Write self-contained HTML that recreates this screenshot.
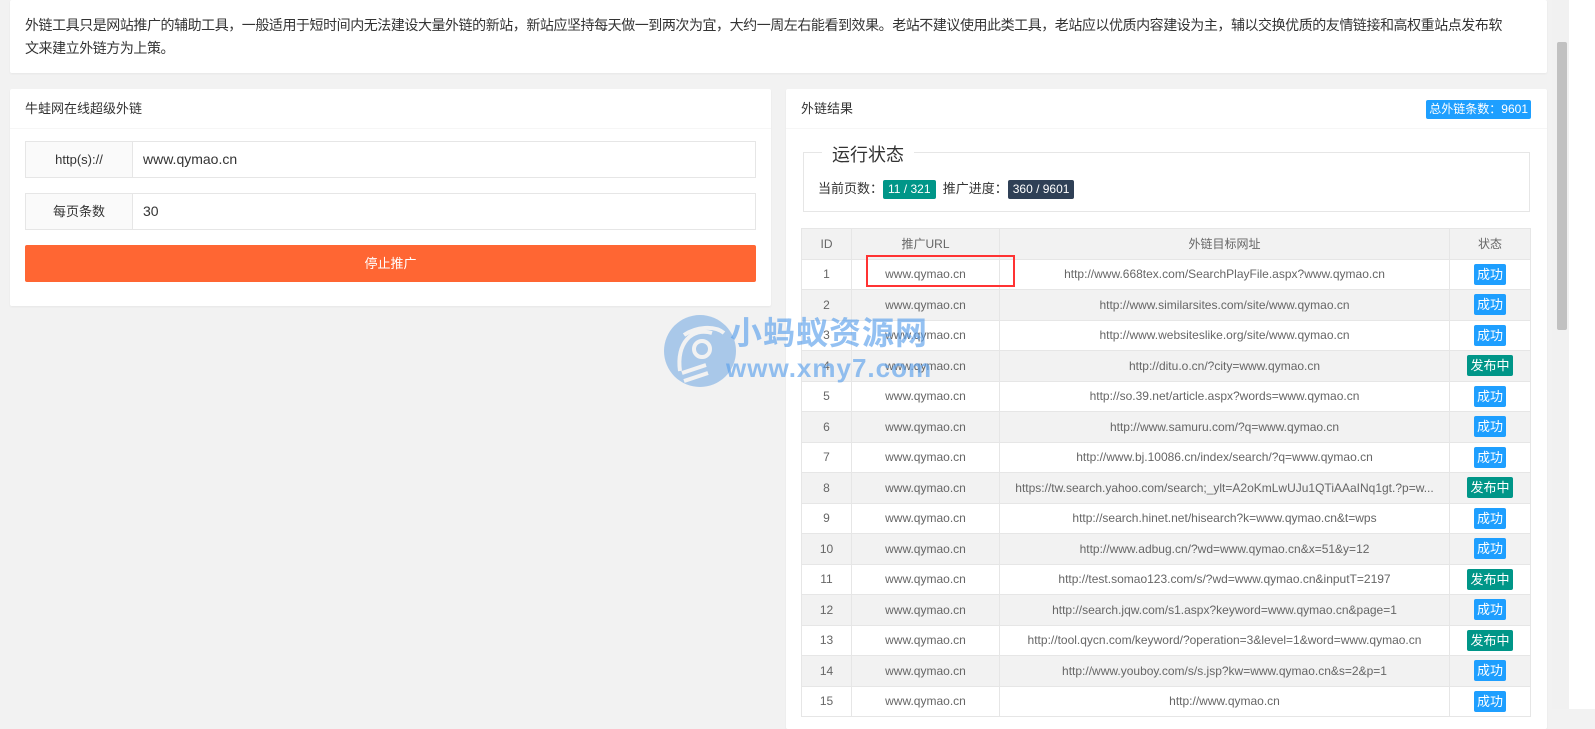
<!DOCTYPE html>
<html><head><meta charset="utf-8"><style>
*{box-sizing:border-box;margin:0;padding:0}
body{width:1595px;height:709px;overflow:hidden;background:#f2f2f2;font-family:"Liberation Sans","Noto Sans CJK SC",sans-serif;color:#333;font-size:13px;position:relative}
.card{position:absolute;background:#fff;border-radius:2px;box-shadow:0 1px 2px rgba(0,0,0,.05)}
.hd{height:40px;line-height:40px;padding:0 15px;border-bottom:1px solid #f6f6f6;font-size:13px;color:#333}
.row{position:absolute;left:15px;width:731px;height:37px;border:1px solid #e6e6e6;display:flex}
.row .l{width:107px;border-right:1px solid #e6e6e6;background:#fafafa;text-align:center;line-height:35px;font-size:13px}
.row .v{padding-left:10px;line-height:35px;font-size:14px}
table{position:absolute;left:15px;top:139px;width:730px;border-collapse:collapse;font-size:12px;color:#666}
td,th{border:1px solid #e6e6e6;height:30.5px;text-align:center;font-weight:normal;padding:0}
th{background:#f2f2f2;color:#666}
tr:nth-child(odd) td{background:#f2f2f2}
.b{display:inline-block;color:#fff;font-size:13px;padding:0 3px;height:21px;line-height:21px;border-radius:2px}
.ok{background:#1E9FFF}.ing{background:#009688}
</style></head><body>
<div class="card" style="left:10px;top:0;width:1537px;height:73px;padding:14px 15px;font-size:14px;line-height:23px;color:#333;letter-spacing:-0.45px;white-space:nowrap;overflow:hidden">外链工具只是网站推广的辅助工具，一般适用于短时间内无法建设大量外链的新站，新站应坚持每天做一到两次为宜，大约一周左右能看到效果。老站不建议使用此类工具，老站应以优质内容建设为主，辅以交换优质的友情链接和高权重站点发布软<br>文来建立外链方为上策。</div>

<div class="card" style="left:10px;top:89px;width:761px;height:217px">
<div class="hd">牛蛙网在线超级外链</div>
<div class="row" style="top:52px"><div class="l">http(s)://</div><div class="v">www.qymao.cn</div></div>
<div class="row" style="top:104px"><div class="l">每页条数</div><div class="v">30</div></div>
<div style="position:absolute;left:15px;top:156px;width:731px;height:37px;background:#ff6633;color:#fff;text-align:center;line-height:37px;font-size:13px;border-radius:2px">停止推广</div>
</div>

<div class="card" style="left:786px;top:89px;width:761px;height:640px">
<div class="hd">外链结果<span class="b ok" style="position:absolute;right:16px;top:11px;height:19px;line-height:19px;font-size:12px">总外链条数：9601</span></div>
<div style="position:absolute;left:17px;top:63px;width:727px;height:60px;border:1px solid #e6e6e6"></div>
<div style="position:absolute;left:36px;top:52px;background:#fff;padding:0 10px;font-size:18px;color:#333">运行状态</div>
<div style="position:absolute;left:32px;top:89px;font-size:13px;color:#333">当前页数：<span class="b ing" style="font-size:12px;height:19px;line-height:19px;padding:0 5px">11 / 321</span>&nbsp; 推广进度：<span class="b" style="background:#2F4056;font-size:12px;height:19px;line-height:19px;padding:0 5px">360 / 9601</span></div>
<table>
<tr><th style="width:50px">ID</th><th style="width:148px">推广URL</th><th>外链目标网址</th><th style="width:81px">状态</th></tr>
<tr><td>1</td><td>www.qymao.cn</td><td>http://www.668tex.com/SearchPlayFile.aspx?www.qymao.cn</td><td><span class="b ok">成功</span></td></tr>
<tr><td>2</td><td>www.qymao.cn</td><td>http://www.similarsites.com/site/www.qymao.cn</td><td><span class="b ok">成功</span></td></tr>
<tr><td>3</td><td>www.qymao.cn</td><td>http://www.websiteslike.org/site/www.qymao.cn</td><td><span class="b ok">成功</span></td></tr>
<tr><td>4</td><td>www.qymao.cn</td><td>http://ditu.o.cn/?city=www.qymao.cn</td><td><span class="b ing">发布中</span></td></tr>
<tr><td>5</td><td>www.qymao.cn</td><td>http://so.39.net/article.aspx?words=www.qymao.cn</td><td><span class="b ok">成功</span></td></tr>
<tr><td>6</td><td>www.qymao.cn</td><td>http://www.samuru.com/?q=www.qymao.cn</td><td><span class="b ok">成功</span></td></tr>
<tr><td>7</td><td>www.qymao.cn</td><td>http://www.bj.10086.cn/index/search/?q=www.qymao.cn</td><td><span class="b ok">成功</span></td></tr>
<tr><td>8</td><td>www.qymao.cn</td><td>https://tw.search.yahoo.com/search;_ylt=A2oKmLwUJu1QTiAAaINq1gt.?p=w...</td><td><span class="b ing">发布中</span></td></tr>
<tr><td>9</td><td>www.qymao.cn</td><td>http://search.hinet.net/hisearch?k=www.qymao.cn&amp;t=wps</td><td><span class="b ok">成功</span></td></tr>
<tr><td>10</td><td>www.qymao.cn</td><td>http://www.adbug.cn/?wd=www.qymao.cn&amp;x=51&amp;y=12</td><td><span class="b ok">成功</span></td></tr>
<tr><td>11</td><td>www.qymao.cn</td><td>http://test.somao123.com/s/?wd=www.qymao.cn&amp;inputT=2197</td><td><span class="b ing">发布中</span></td></tr>
<tr><td>12</td><td>www.qymao.cn</td><td>http://search.jqw.com/s1.aspx?keyword=www.qymao.cn&amp;page=1</td><td><span class="b ok">成功</span></td></tr>
<tr><td>13</td><td>www.qymao.cn</td><td>http://tool.qycn.com/keyword/?operation=3&amp;level=1&amp;word=www.qymao.cn</td><td><span class="b ing">发布中</span></td></tr>
<tr><td>14</td><td>www.qymao.cn</td><td>http://www.youboy.com/s/s.jsp?kw=www.qymao.cn&amp;s=2&amp;p=1</td><td><span class="b ok">成功</span></td></tr>
<tr><td>15</td><td>www.qymao.cn</td><td>http://www.qymao.cn</td><td><span class="b ok">成功</span></td></tr>
</table>
</div>

<div style="position:absolute;left:866px;top:255px;width:149px;height:32px;border:2px solid #f33"></div>

<svg style="position:absolute;left:662px;top:313px" width="76" height="76" viewBox="0 0 76 76">
<circle cx="38" cy="38" r="36" fill="rgba(110,165,225,.55)"/>
<path d="M18 58 C14 30 30 14 50 20 M22 22 C34 14 52 12 62 20" stroke="#f2f2f2" stroke-width="4" fill="none"/>
<circle cx="40" cy="36" r="8" fill="none" stroke="#f2f2f2" stroke-width="4"/>
<path d="M20 60 L44 52 M22 68 L46 60" stroke="#f2f2f2" stroke-width="4"/>
</svg>
<div style="position:absolute;left:730px;top:311px;font-size:32px;font-weight:bold;color:rgba(90,160,235,.65);letter-spacing:1px;font-family:'Noto Sans CJK SC',sans-serif;line-height:40px">小蚂蚁资源网</div>
<div style="position:absolute;left:726px;top:352px;font-size:26px;font-weight:bold;color:rgba(90,160,235,.65);line-height:32px;letter-spacing:1px">www.xmy7.com</div>

<div style="position:absolute;left:1552px;top:0;width:17px;height:709px;background:#f1f1f1"></div>
<div style="position:absolute;left:1557px;top:42px;width:10px;height:288px;background:#c1c1c1;border-radius:2px"></div>
<div style="position:absolute;left:1569px;top:0;width:26px;height:709px;background:#fff"></div>
</body></html>
